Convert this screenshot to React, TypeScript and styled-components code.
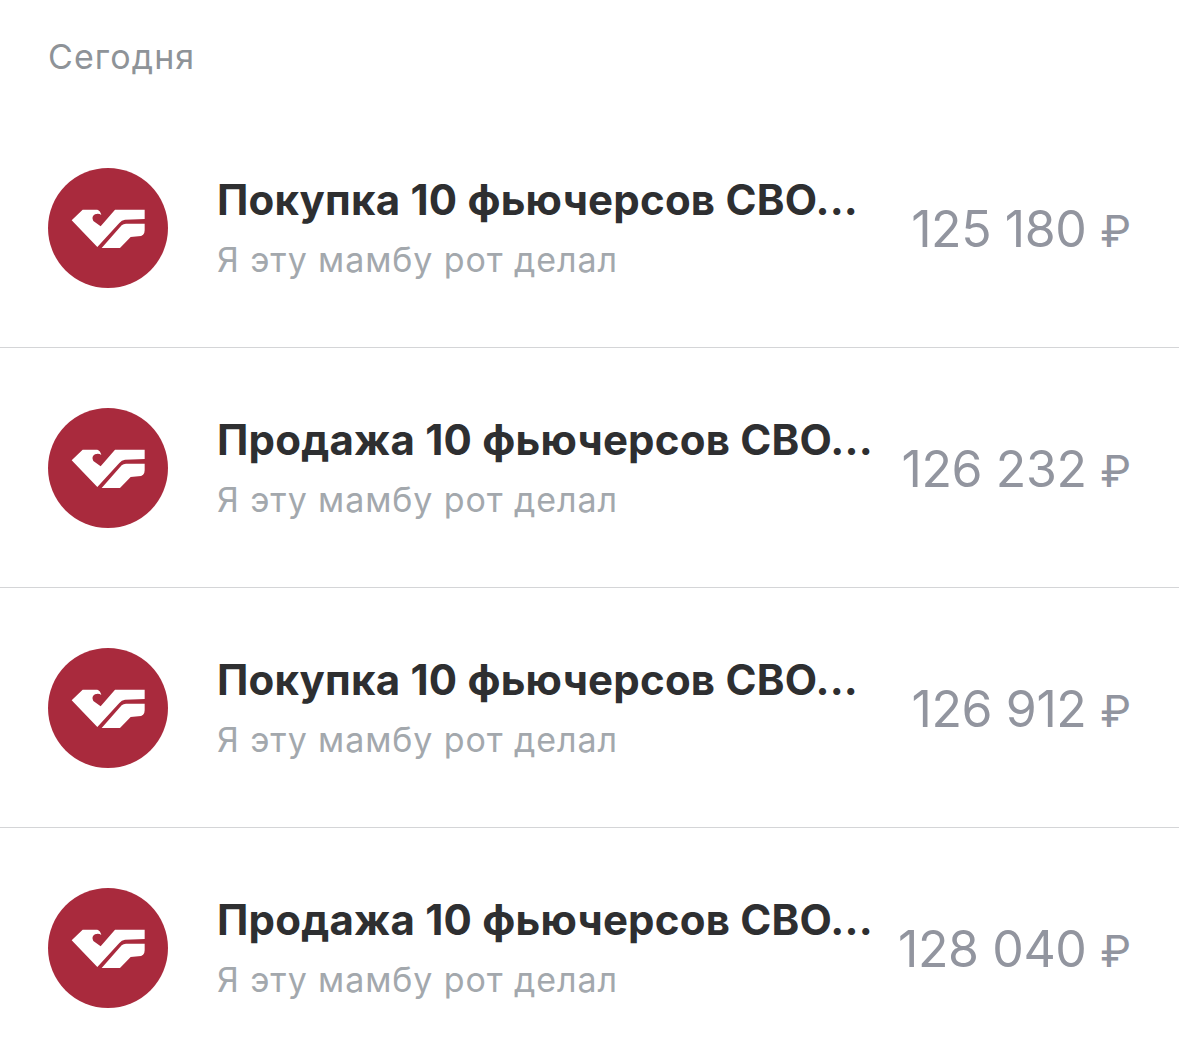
import React from "react";
import styled, { createGlobalStyle } from "styled-components";

const GlobalStyle = createGlobalStyle`
	html, body {
		margin: 0;
		padding: 0;
		background: #ffffff;
	}
	body {
		font-family: Inter, "Liberation Sans", sans-serif;
		overflow: hidden;
	}
`;

const Page = styled.div`
	width: 1179px;
	height: 1061px;
	background: #ffffff;
`;

const DayTitle = styled.div`
	height: 108px;
	box-sizing: border-box;
	padding: 35px 48px 0;
	font-size: 34px;
	line-height: 44px;
	letter-spacing: 1.1px;
	color: #8e9398;
`;

const Row = styled.div`
	height: 240px;
	box-sizing: border-box;
	display: flex;
	align-items: center;
	padding: 0 48px;
	border-bottom: 1px solid #d4d5d7;

	&:last-child {
		border-bottom: none;
	}
`;

const Avatar = styled.div`
	flex: none;
	width: 120px;
	height: 120px;
	border-radius: 50%;
	background: #a92a3d;
	display: flex;
	align-items: center;
	justify-content: center;
`;

const LogoSvg = styled.svg`
	margin-top: 2px;
	fill: #ffffff;
`;

const Body = styled.div`
	flex: 1;
	min-width: 0;
	margin-left: 49px;
	padding-top: 4px;
	display: flex;
	flex-direction: column;
	gap: 14px;
`;

const Title = styled.div`
	font-size: 42px;
	font-weight: 650;
	line-height: 46px;
	letter-spacing: 0.2px;
	color: #2e2f31;
	white-space: nowrap;
`;

const Note = styled.div`
	font-size: 34px;
	line-height: 46px;
	letter-spacing: 0.9px;
	color: #a3a8ad;
	white-space: nowrap;
`;

const Amount = styled.div`
	flex: none;
	padding-top: 4px;
	font-size: 50px;
	line-height: 56px;
	letter-spacing: -0.4px;
	color: #92959f;
	white-space: nowrap;
`;

const Ruble = styled.span`
	font-size: 44px;
	letter-spacing: 0;
`;

// drawn in 3x zoom units of the reference, hence the odd viewBox
function BankLogo() {
	return (
		<LogoSvg width="77" height="42" viewBox="90 145 231 126">
			<path d="M95 182 L128 150 L172 150 Q181 153 184 166 Q176 160 165 164 Q153 170 160 184 L182 200 L225 150 L314 150 L314 178 L255 180 Q245 181 238 190 L172 262 Z" />
			<path d="M185 265 L245 197 Q250 192 258 192 L314 192 L314 212 Q314 230 295 230 L272 232 L240 265 Z" />
		</LogoSvg>
	);
}

const items = [
	{ title: "Покупка 10 фьючерсов СВО...", amount: "125 180" },
	{ title: "Продажа 10 фьючерсов СВО...", amount: "126 232" },
	{ title: "Покупка 10 фьючерсов СВО...", amount: "126 912" },
	{ title: "Продажа 10 фьючерсов СВО...", amount: "128 040" },
];

export default function App() {
	return (
		<Page>
			<GlobalStyle />
			<DayTitle>Сегодня</DayTitle>
			{items.map((item, i) => (
				<Row key={i}>
					<Avatar>
						<BankLogo />
					</Avatar>
					<Body>
						<Title>{item.title}</Title>
						<Note>Я эту мамбу рот делал</Note>
					</Body>
					<Amount>
						{item.amount} <Ruble>₽</Ruble>
					</Amount>
				</Row>
			))}
		</Page>
	);
}
